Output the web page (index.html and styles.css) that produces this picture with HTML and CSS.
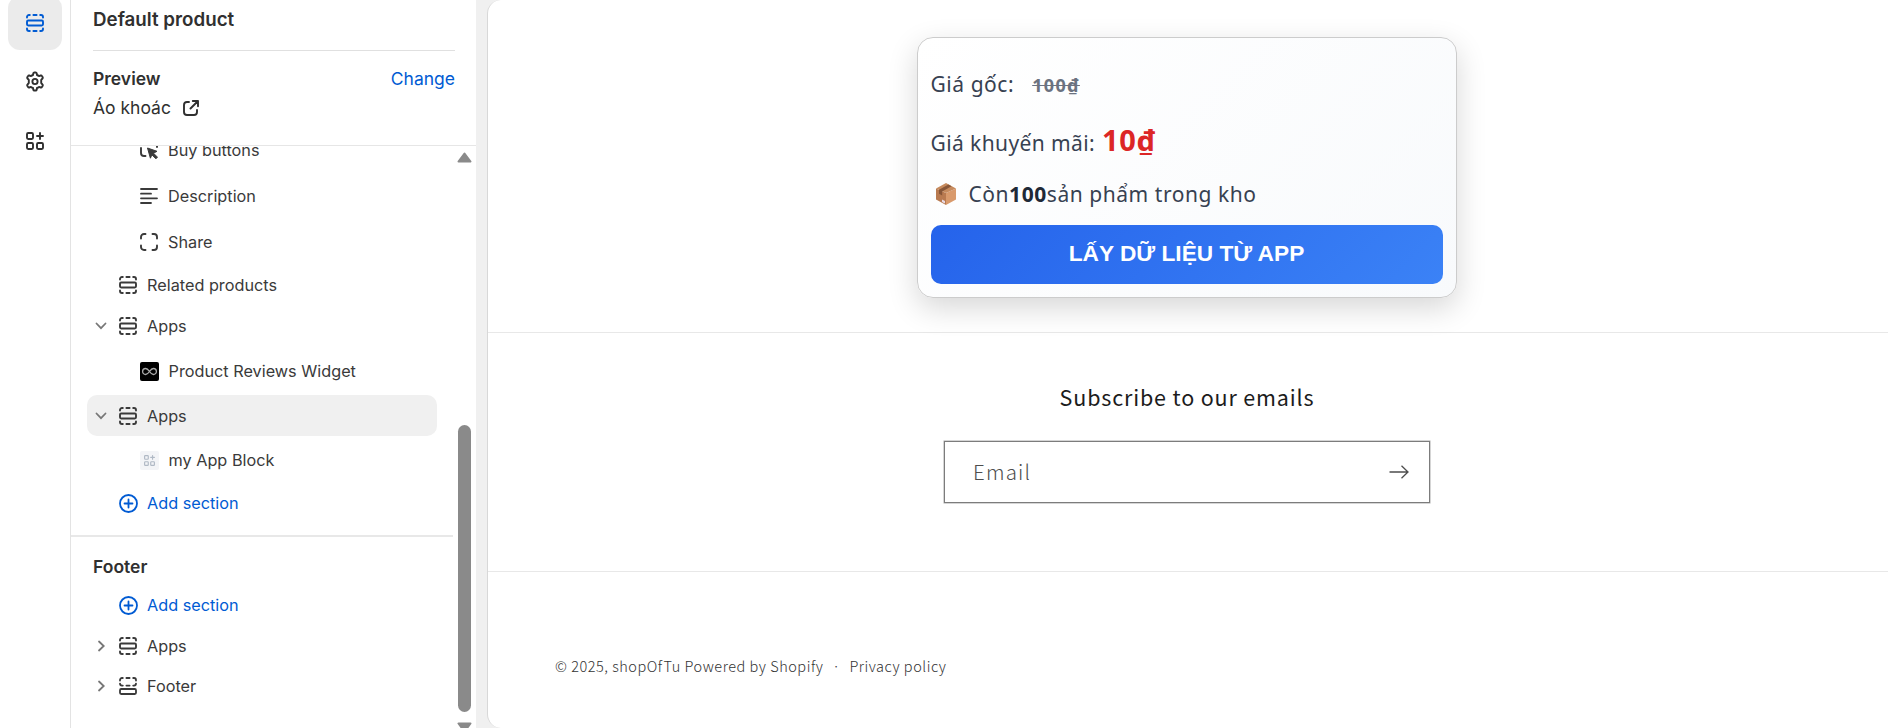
FILE: index.html
```html
<!DOCTYPE html>
<html lang="vi">
<head>
<meta charset="utf-8">
<title>Default product</title>
<link rel="stylesheet" href="styles.css">
</head>
<body>
<svg class="defs" width="0" height="0">
  <symbol id="section" viewBox="0 0 18 18">
    <g fill="none" stroke="currentColor" stroke-width="1.9" stroke-linecap="round">
      <rect x="1" y="6.5" width="16" height="5" rx="1.2"/>
      <path d="M1 3.6V3a2 2 0 0 1 2-2h.8M7.4 1h3.2M14.2 1h.8a2 2 0 0 1 2 2v.6M1 14.4v.6a2 2 0 0 0 2 2h.8M7.4 17h3.2M14.2 17h.8a2 2 0 0 0 2-2v-.6"/>
    </g>
  </symbol>
  <symbol id="footer-icon" viewBox="0 0 18 18">
    <g fill="none" stroke="currentColor" stroke-width="1.8" stroke-linecap="round">
      <rect x="1" y="12" width="16" height="5" rx="1.2"/>
      <path d="M1 3.6V3a2 2 0 0 1 2-2h.8M7.4 1h3.2M14.2 1h.8a2 2 0 0 1 2 2v.6M1 6.6c0 1.2.8 2 2 2h.8M7.4 8.6h3.2M14.2 8.6h.8a2 2 0 0 0 2-2"/>
    </g>
  </symbol>
  <symbol id="plus-circle" viewBox="0 0 19 19">
    <g fill="none" stroke="currentColor" stroke-width="1.8" stroke-linecap="round">
      <circle cx="9.5" cy="9.5" r="8.5"/>
      <path d="M9.5 5.5v8M5.5 9.5h8"/>
    </g>
  </symbol>
  <symbol id="apps-plus" viewBox="0 0 18 18">
    <g fill="none" stroke="currentColor" stroke-width="1.9" stroke-linecap="round">
      <rect x="1" y="1" width="6" height="6" rx="1.2"/>
      <rect x="1" y="11" width="6" height="6" rx="1.2"/>
      <rect x="11" y="11" width="6" height="6" rx="1.2"/>
      <path d="M14 1v6M11 4h6"/>
    </g>
  </symbol>
  <symbol id="down" viewBox="0 0 12 12">
    <path d="M1.5 3.5 6 8.2l4.500-4.700" fill="none" stroke="currentColor" stroke-width="1.8" stroke-linecap="round"/>
  </symbol>
  <symbol id="right" viewBox="0 0 12 12">
    <path d="M4 1.500 8.700 6 4 10.500" fill="none" stroke="currentColor" stroke-width="1.8" stroke-linecap="round"/>
  </symbol>
</svg>

<div class="editor">
  <nav class="rail">
    <span class="rail-item active"><svg class="i18"><use href="#section"/></svg></span>
    <span class="rail-item">
      <svg class="gear" viewBox="0 0 20 20"><g fill="none" stroke="currentColor" stroke-width="1.9" stroke-linejoin="round"><circle cx="10" cy="10" r="2.6"/><path d="M8.300 1.800Q8.500 1 9.300 1h1.400q.8 0 1 .8l.3 1.700q1.100.4 2 1.100l1.700-.6q.8-.3 1.200.4l.8 1.300q.4.700-.2 1.300L16.200 8.400V11.600l1.300 1.400q.6.600.2 1.300l-.8 1.300q-.4.700-1.200.4l-1.700-.6q-.9.700-2 1.100l-.3 1.700q-.2.800-1 .8H9.300q-.8 0-1-.8L8 16.500q-1.100-.4-2-1.100l-1.700.6q-.8.300-1.200-.4l-.8-1.300q-.4-.7.200-1.300L3.800 11.600V8.400L2.500 7q-.6-.6-.2-1.300l.8-1.300q.4-.7 1.200-.4L6 4.600q.9-.7 2-1.100z"/></g></svg>
    </span>
    <span class="rail-item"><svg class="i18"><use href="#apps-plus"/></svg></span>
  </nav>

  <aside class="panel">
    <header class="panel-head">
      <h1 class="title">Default product</h1>
      <div class="preview-row"><strong>Preview</strong><a class="link">Change</a></div>
      <div class="product">Áo khoác
        <svg class="external" viewBox="0 0 16 16"><g fill="none" stroke="currentColor" stroke-width="1.9" stroke-linecap="round" stroke-linejoin="round"><path d="M6 2H4Q1 2 1 5v7q0 3 3 3h7q3 0 3-3v-2"/><path d="M9.800 1H15v5.200M15 1 7.500 8.500"/></g></svg>
      </div>
    </header>

    <div class="panel-body">
      <div class="tree">
        <div class="row block first">
          <svg class="i18" viewBox="0 0 18 18"><path d="M1 3.500V3a2 2 0 0 1 2-2h.5M1 7v5q0 3 3 3h1.500M17 4v2" fill="none" stroke="currentColor" stroke-width="1.9" stroke-linecap="round"/><path d="M7.500 7 17 10.300l-3.500 1.900 4 4-1.600 1.600-4-4-1.500 3.400z" fill="currentColor" stroke="currentColor" stroke-linejoin="round"/></svg>
          <span>Buy buttons</span>
        </div>
        <div class="row block">
          <svg class="i18" viewBox="0 0 18 18"><path d="M1 2h16M1 6.700h10M1 11.300h16M1 16h10" fill="none" stroke="currentColor" stroke-width="1.8" stroke-linecap="round"/></svg>
          <span>Description</span>
        </div>
        <div class="row block">
          <svg class="i18" viewBox="0 0 18 18"><path d="M1 5.500V4a3 3 0 0 1 3-3h1.500M12.500 1H14a3 3 0 0 1 3 3v1.500M17 12.500V14a3 3 0 0 1-3 3h-1.500M5.500 17H4a3 3 0 0 1-3-3v-1.500" fill="none" stroke="currentColor" stroke-width="1.9" stroke-linecap="round"/></svg>
          <span>Share</span>
        </div>
        <div class="row"><i class="chev"></i><svg class="i18"><use href="#section"/></svg><span>Related products</span></div>
        <div class="row"><svg class="chev"><use href="#down"/></svg><svg class="i18"><use href="#section"/></svg><span>Apps</span></div>
        <div class="row block child">
          <svg class="i19" viewBox="0 0 19 19"><rect width="19" height="19" rx="2" fill="#000"/><path d="M9.500 9.500C8 7.300 7 6.500 5.600 6.500a3 3 0 0 0 0 6c1.400 0 2.400-.8 3.900-3s2.500-3 3.900-3a3 3 0 0 1 0 6c-1.400 0-2.400-.8-3.900-3z" fill="none" stroke="#aaa" stroke-width="1.3"/></svg>
          <span>Product Reviews Widget</span>
        </div>
        <div class="row selected"><svg class="chev"><use href="#down"/></svg><svg class="i18"><use href="#section"/></svg><span>Apps</span></div>
        <div class="row block child">
          <span class="app-tile"><svg class="i10" viewBox="0 0 18 18"><use href="#apps-plus"/></svg></span>
          <span>my App Block</span>
        </div>
        <div class="row link"><i class="chev"></i><svg class="i19"><use href="#plus-circle"/></svg><span>Add section</span></div>
        <hr class="rule">
        <h2 class="group">Footer</h2>
        <div class="row link"><i class="chev"></i><svg class="i19"><use href="#plus-circle"/></svg><span>Add section</span></div>
        <div class="row"><svg class="chev"><use href="#right"/></svg><svg class="i18"><use href="#section"/></svg><span>Apps</span></div>
        <div class="row"><svg class="chev"><use href="#right"/></svg><svg class="i18"><use href="#footer-icon"/></svg><span>Footer</span></div>
      </div>
      <div class="scrollbar">
        <svg class="arrow" viewBox="0 0 15 11"><path d="M7.500 1.500 13.500 9.500h-12z" fill="#8a8a8a" stroke="#8a8a8a" stroke-width="2" stroke-linejoin="round"/></svg>
        <div class="thumb"></div>
        <svg class="arrow" viewBox="0 0 15 11"><path d="M1.500 1.500h12L7.500 9.500z" fill="#8a8a8a" stroke="#8a8a8a" stroke-width="2" stroke-linejoin="round"/></svg>
      </div>
    </div>
  </aside>

  <main class="canvas">
    <section class="product-section">
      <div class="card">
        <div class="price original"><span class="label">Giá gốc:</span><s class="old">100₫</s></div>
        <div class="price sale"><span class="label">Giá khuyến mãi:</span><b class="new">10₫</b></div>
        <div class="stock">
          <svg class="box" viewBox="0 0 20 22"><path d="M0 5.500 10 10v12L0 16.500z" fill="#b97a50"/><path d="M20 5.500 10 10v12l10-5.500z" fill="#d99a6c"/><path d="M0 5.500 10 0l10 5.500L10 10z" fill="#c68a5d"/><path d="m4.500 3.200 3-1.700L17 6.800v4l-3.200 1.600v-4z" fill="#875638" transform="matrix(-1 0 0 1 20 0)"/><path d="m6 16.500 3 1.500v2.500l-3-1.500z" fill="#e8d9e4"/></svg>
          <span class="label">Còn<b>100</b>sản phẩm trong kho</span>
        </div>
        <button class="cta">LẤY DỮ LIỆU TỪ APP</button>
      </div>
    </section>
    <section class="newsletter">
      <h2 class="subscribe">Subscribe to our emails</h2>
      <div class="field"><span class="email">Email</span>
        <svg class="go" viewBox="0 0 20 14"><path d="M.5 7h18M12.500.8 19 7l-6.500 6.200" fill="none" stroke="currentColor" stroke-width="1.3"/></svg>
      </div>
    </section>
    <footer class="legal"><span class="copy">© 2025, shopOfTu Powered by Shopify</span><span class="dot">·</span><span class="policy">Privacy policy</span></footer>
  </main>
</div>
</body>
</html>
```
FILE: styles.css
```css
* { box-sizing: border-box; }
body {
  margin: 0;
  background: #f0f0f0;
  color: #303030;
  font-family: Inter, "Liberation Sans", sans-serif;
}
.defs { display: none; }
svg { display: block; flex: none; }
h1, h2 { margin: 0; }
.editor { display: flex; width: 1888px; height: 728px; overflow: hidden; }
.i18 { width: 18px; height: 18px; }
.i19 { width: 19px; height: 19px; }
.i10 { width: 11px; height: 11px; }
.link { color: #005bd3; }

.rail {
  width: 71px;
  padding-left: 8px;
  border-right: 1px solid #e3e3e3;
  background: #fff;
}
.rail-item {
  display: flex;
  align-items: center;
  justify-content: center;
  width: 54px;
  height: 54px;
  margin-bottom: 6px;
}
.rail-item:first-child { margin: -4px 0 4px; padding-bottom: 1px; }
.rail-item.active { border-radius: 12px; background: #ebebeb; color: #005bd3; }
.gear { width: 20px; height: 21px; }

.panel { width: 405px; background: #fff; display: flex; flex-direction: column; }
.panel-head { height: 146px; padding: 0 21px 0 22px; border-bottom: 1px solid #e6e6e6; }
.title {
  height: 51px;
  padding-top: 8px;
  border-bottom: 1px solid #e0e0e0;
  font-size: 18.75px;
  font-weight: 600;
  line-height: 23px;
}
.preview-row {
  display: flex;
  justify-content: space-between;
  padding-top: 15px;
  font-size: 17.5px;
  line-height: 25px;
}
.preview-row strong { font-weight: 600; }
.product { display: flex; align-items: center; gap: 12px; font-size: 17.5px; line-height: 33px; }
.external { width: 16px; height: 16px; }

.panel-body { display: flex; height: 582px; overflow: hidden; }
.tree { width: 382px; color: #3a3a3a; }
.row {
  display: flex;
  align-items: center;
  gap: 10px;
  width: 350px;
  height: 40.5px;
  margin-left: 16px;
  padding-left: 8px;
  font-size: 16.25px;
}
.chev { width: 12px; height: 12px; margin-right: 2px; color: #777; }
.block { height: 46px; padding-left: 53px; }
.block.first { margin-top: -19px; }
.child { height: 48px; padding-top: 2px; gap: 9.5px; }
.selected + .child { height: 46px; padding-top: 0; margin-top: 1px; }
.selected { height: 41px; margin-top: 1px; border-radius: 10px; background: #f0f0f0; }
.row.link { gap: 10px; }
.row.link .i19 { margin-right: -1px; }
.app-tile {
  display: flex;
  align-items: center;
  justify-content: center;
  width: 19px;
  height: 19px;
  border-radius: 2px;
  background: #f3f4f7;
  color: #b0b9c5;
}
.rule { height: 2px; margin: 11px 0 0; border: 0; background: #e8e8e8; }
.group { height: 48.5px; padding: 18px 0 0 22px; font-size: 17.5px; font-weight: 600; line-height: 24px; color: #303030; }
.tree .link { color: #005bd3; }
.scrollbar { display: flex; flex-direction: column; align-items: center; width: 23px; padding: 6px 0 0; }
.arrow { width: 15px; height: 11px; }
.thumb { flex: none; width: 13px; height: 287px; margin: 262px 0 10px; border-radius: 7px; background: #8a8a8a; }

.canvas {
  flex: 1;
  margin-left: 11px;
  border-left: 1px solid #d8d8d8;
  border-radius: 14px 0 0 14px;
  background: #fff;
}
.product-section { display: flex; justify-content: center; height: 333px; padding: 37px 2px 0 0; border-bottom: 1px solid #e8e8e8; }
.card {
  display: flex;
  flex-direction: column;
  width: 540px;
  height: 261px;
  margin-right: 1px;
  padding: 24px 13px;
  border: 1px solid #ccc;
  border-radius: 16px;
  background: linear-gradient(135deg, #fff, #f8fafc);
  box-shadow: 0 10px 30px rgba(0, 0, 0, .16);
  color: #374151;
  font-family: "Noto Sans", "Open Sans", sans-serif;
  font-size: 21px;
  letter-spacing: .55px;
  padding-bottom: 13px;
}
.price { display: flex; align-items: baseline; }
.original { height: 49px; line-height: 45px; }
.sale { height: 65px; line-height: 57px; letter-spacing: .4px; }
.old { margin-left: 18px; color: #6b7280; font-size: 18px; font-weight: 700; letter-spacing: 1.3px; }
.new { margin-left: 7px; color: #dc2626; font-size: 29px; letter-spacing: .6px; }
.stock { display: flex; align-items: center; gap: 13px; height: 36px; padding-left: 5px; }
.box { width: 20px; height: 22px; }
.stock b { color: #1f2937; }
.cta {
  flex: none;
  height: 59px;
  margin-top: auto;
  padding: 0 0 3px;
  border: 0;
  border-radius: 10px;
  background: linear-gradient(135deg, #2563eb, #3b82f6);
  color: #fff;
  font: bold 22.7px "Liberation Sans", Arial, sans-serif;
}

.newsletter {
  display: flex;
  flex-direction: column;
  align-items: center;
  height: 239px;
  padding-right: 2px;
  border-bottom: 1px solid #e8e8e8;
  font-family: "Noto Sans CJK JP", sans-serif;
}
.subscribe { padding-top: 47px; color: #1c1c1c; font-size: 21.5px; font-weight: 400; line-height: 34px; letter-spacing: .85px; }
.field {
  display: flex;
  align-items: center;
  justify-content: space-between;
  width: 486px;
  height: 62px;
  margin-top: 27px;
  padding: 0 20px 0 28px;
  border: 1px solid #7c7c7c;
  box-shadow: 0 0 0 .5px #aaa;
  color: #4d4d4d;
}
.email { padding-bottom: 2px; font-size: 20.5px; font-weight: 300; letter-spacing: 1.2px; }
.go { width: 20px; height: 14px; }
.legal {
  display: flex;
  padding: 82px 0 0 67px;
  color: #333;
  font-family: "Noto Sans CJK JP", sans-serif;
  font-size: 14.5px;
  font-weight: 300;
  line-height: 24px;
  letter-spacing: .53px;
}
.dot { width: 26px; text-align: center; }
```
